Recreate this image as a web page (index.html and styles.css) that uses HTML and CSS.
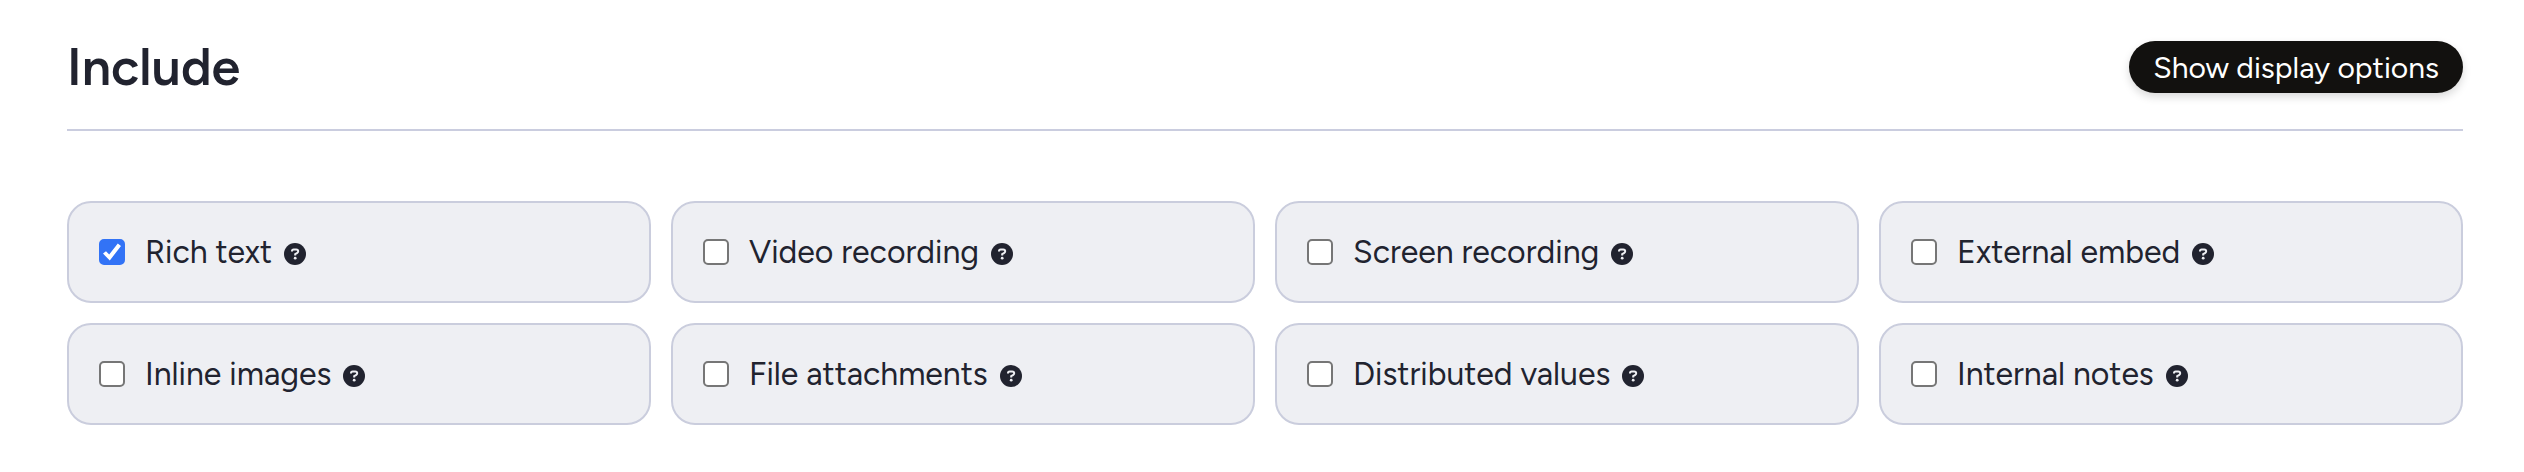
FILE: index.html
```html
<!DOCTYPE html>
<html lang="en">
<head>
  <meta charset="UTF-8">
  <meta name="viewport" content="width=device-width, initial-scale=1">
  <title>Include</title>
  <link rel="stylesheet" href="styles.css">
</head>
<body>

  <svg class="sprite" aria-hidden="true">
    <symbol id="help" viewBox="0 0 22 22">
      <circle cx="11" cy="11" r="11" fill="currentColor"/>
      <path d="M8 8.5V8q0-1.6 1.7-1.6h2.5q2 0 2 1.900 0 1.200-1.200 1.900L11.200 11.200V12.400" fill="none" stroke="#eeeff3" stroke-width="2"/>
      <circle cx="11.200" cy="15.200" r="1.400" fill="#eeeff3"/>
    </symbol>
  </svg>

  <main class="include">
    <header class="include-header">
      <h1>Include</h1>
      <button type="button" class="options-button">Show display options</button>
    </header>

    <div class="options">
      <label class="option">
        <input type="checkbox" checked>
        <span>Rich text</span>
        <svg class="help"><use href="#help"/></svg>
      </label>
      <label class="option">
        <input type="checkbox">
        <span>Video recording</span>
        <svg class="help"><use href="#help"/></svg>
      </label>
      <label class="option">
        <input type="checkbox">
        <span>Screen recording</span>
        <svg class="help"><use href="#help"/></svg>
      </label>
      <label class="option">
        <input type="checkbox">
        <span>External embed</span>
        <svg class="help"><use href="#help"/></svg>
      </label>
      <label class="option">
        <input type="checkbox">
        <span>Inline images</span>
        <svg class="help"><use href="#help"/></svg>
      </label>
      <label class="option">
        <input type="checkbox">
        <span>File attachments</span>
        <svg class="help"><use href="#help"/></svg>
      </label>
      <label class="option">
        <input type="checkbox">
        <span>Distributed values</span>
        <svg class="help"><use href="#help"/></svg>
      </label>
      <label class="option">
        <input type="checkbox">
        <span>Internal notes</span>
        <svg class="help"><use href="#help"/></svg>
      </label>
    </div>
  </main>

</body>
</html>
```
FILE: styles.css
```css
* { box-sizing: border-box; }

body {
  margin: 0;
  background: #fff;
  color: #21232f;
  font-family: Figtree, Lato, sans-serif;
}

.sprite {
  display: none;
}

.include {
  padding: 36px 61px 48px 67px;
}

.include-header {
  display: flex;
  justify-content: space-between;
  align-items: center;
  padding-bottom: 31px;
  border-bottom: 2px solid #cacddf;
}

h1 {
  margin: 0;
  font-size: 52px;
  font-weight: 600;
  line-height: 62px;
}

.options-button {
  height: 52px;
  padding: 0 24px;
  border: 0;
  border-radius: 26px;
  background: #12110f;
  color: #fff;
  font-family: inherit;
  font-size: 30px;
  box-shadow: 0 4px 8px rgba(0, 0, 0, 0.15);
}

.options {
  display: grid;
  grid-template-columns: repeat(4, 1fr);
  gap: 20px;
  margin-top: 70px;
}

.option {
  display: flex;
  align-items: center;
  padding: 30px;
  border: 2px solid #cacddd;
  border-radius: 24px;
  background: #eeeff3;
  font-size: 32px;
  line-height: 38px;
}

.option input {
  appearance: none;
  display: grid;
  place-items: center;
  width: 26px;
  height: 26px;
  margin: 0 20px 0 0;
  border: 2px solid #767676;
  border-radius: 5px;
  background: #fff;
}

.option input:checked {
  border-color: #3273f6;
  background: #3273f6;
}

.option input:checked::before {
  content: "";
  width: 20px;
  height: 20px;
  background: #fff;
  clip-path: polygon(5% 58%, 20% 46%, 36% 63%, 79% 8%, 95% 20%, 39% 92%);
}

.help {
  width: 22px;
  height: 22px;
  margin: 4px 0 0 12px;
}
```
